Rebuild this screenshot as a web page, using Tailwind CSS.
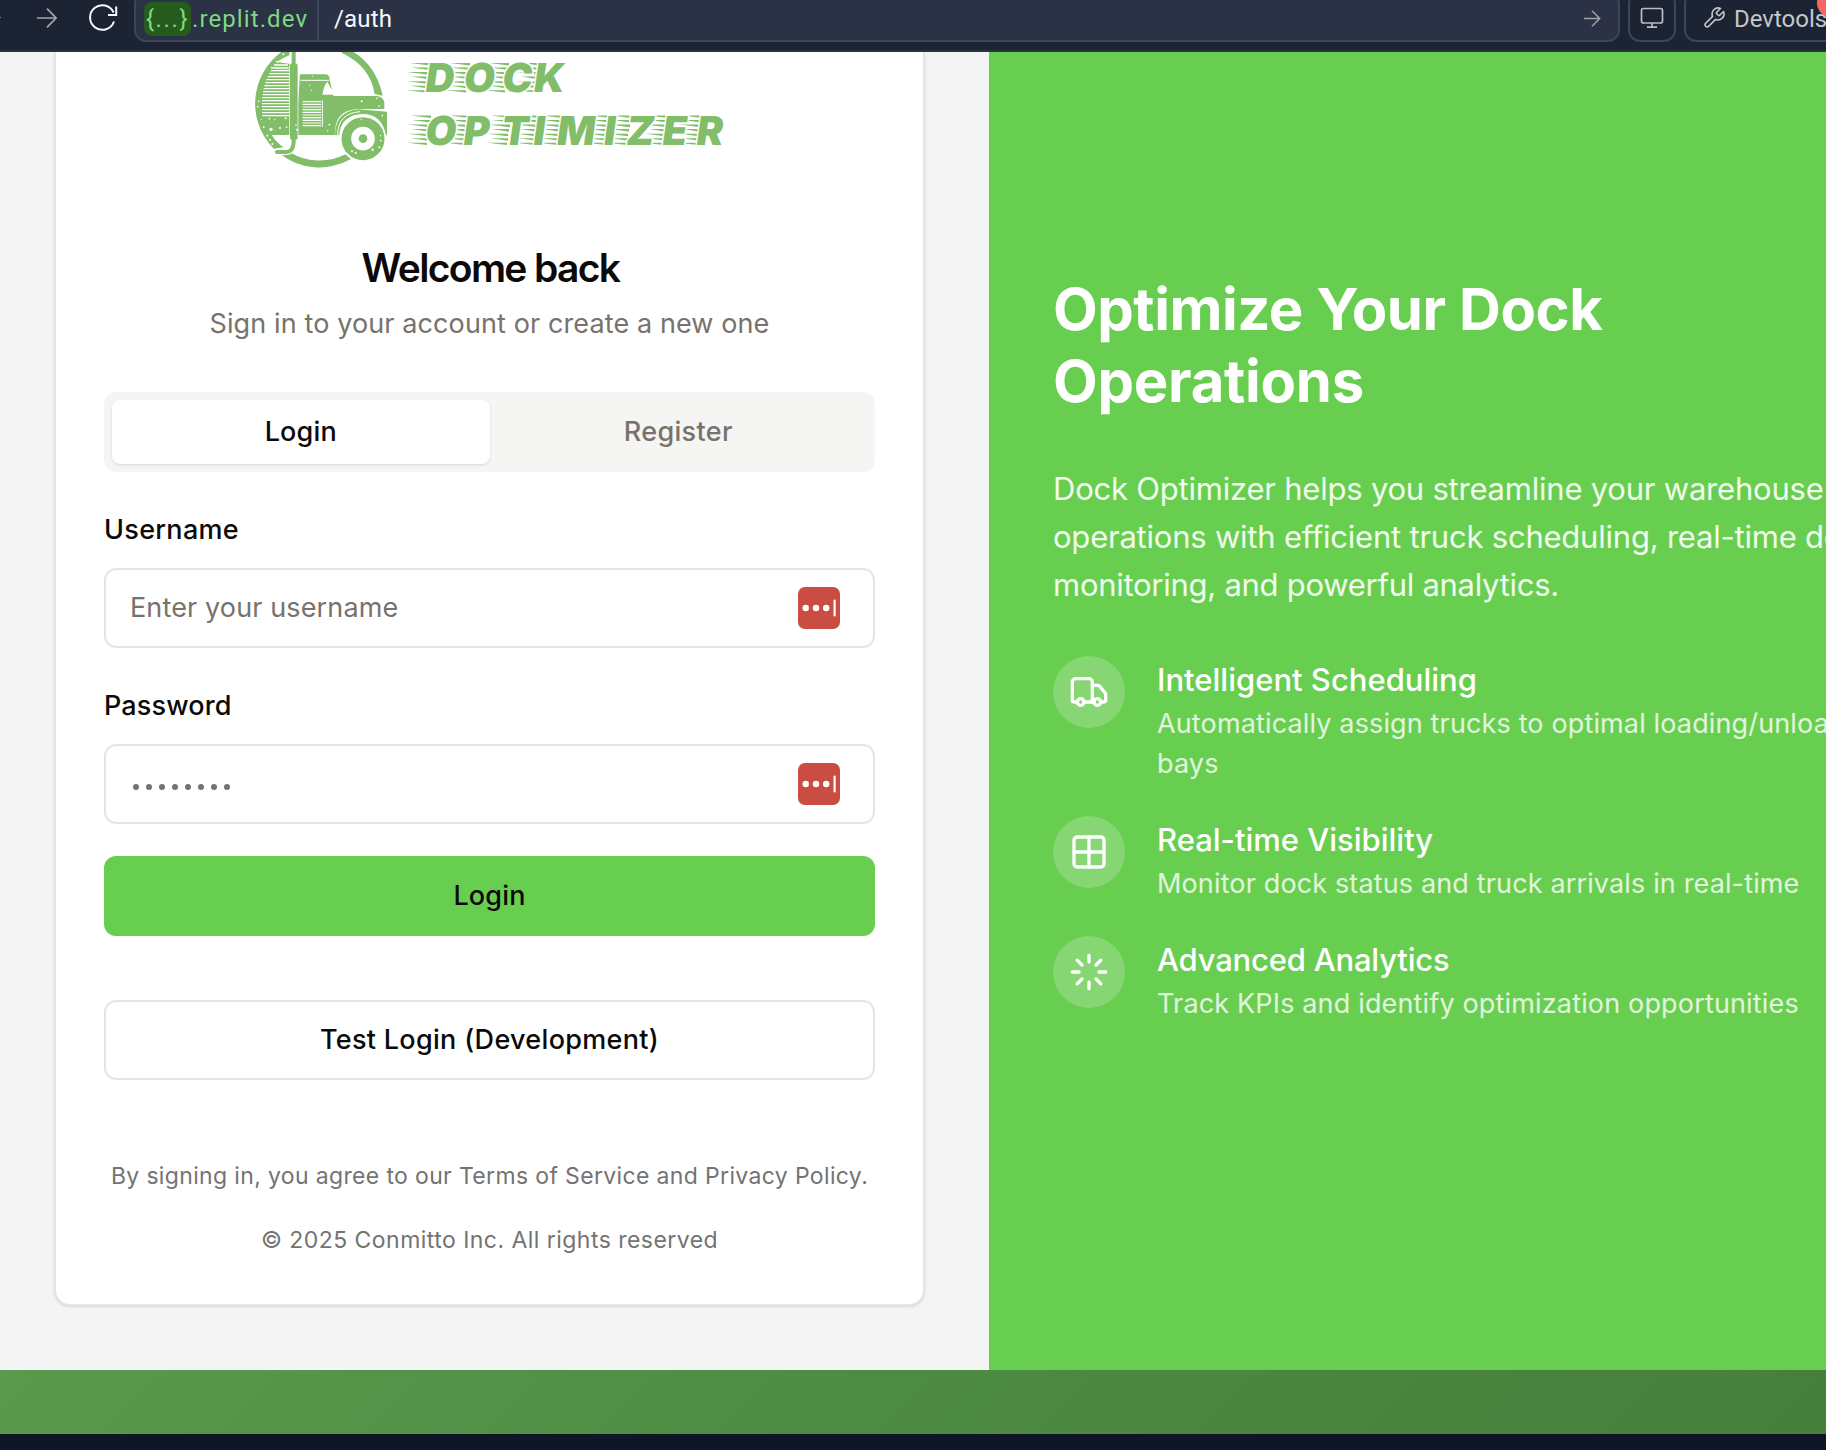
<!DOCTYPE html>
<html lang="en">
<head>
<meta charset="utf-8">
<title>Dock Optimizer</title>
<script src="https://cdn.jsdelivr.net/npm/@tailwindcss/browser@4"></script>
</head>
<body class="w-[1826px] h-[1450px] overflow-hidden bg-[#0e1525] font-['Inter',sans-serif] text-[#0c0a09]">

<header class="flex h-[52px] items-start overflow-hidden border-b-2 border-[#2b3245] bg-[#1c2333] font-['Roboto',sans-serif] text-[24px]">
  <div class="h-[1px] w-[1px] shrink-0 mt-[17px] bg-[#7f8593]"></div>
  <svg class="ml-[35px] mt-[7px] h-[22px] w-[22px] shrink-0" viewBox="0 0 23 22" fill="none" stroke="#a3a6ad" stroke-width="1.8"><path d="M1 11h20M11.500 1.200 21 11l-9.500 9.800"/></svg>
  <svg class="ml-[31px] mt-[4px] h-[28px] w-[30px] shrink-0" viewBox="0 0 30 28" fill="none" stroke="#f5f9fc" stroke-width="2"><path d="M25 17.500A12.300 12.300 0 1 1 24.600 8.500M27.200 2.500V11H19"/></svg>
  <div class="-mt-2 ml-[15px] flex h-[50px] w-[1486px] shrink-0 items-stretch rounded-xl border-2 border-[#3c445c] bg-[#2b3245] pt-[6px] leading-[40px]">
    <div class="-mt-[6px] flex w-[183px] shrink-0 items-center border-r-2 border-[#3c445c] pl-[8px] pt-[4px] text-[#7fd97f]">
      <span class="flex h-[34px] w-[47px] shrink-0 items-center justify-center rounded-lg bg-[#265b1e] tracking-[1.6px]">{...}</span><span class="pl-px tracking-[1.1px]">.replit.dev</span>
    </div>
    <span class="-mt-px pl-[15px] tracking-[.2px] text-[#f5f9fc]">/auth</span>
    <svg class="ml-auto mr-[17px] mt-[10px] h-[17px] w-[17px]" viewBox="0 0 17 17" fill="none" stroke="#9da2a6" stroke-width="1.500"><path d="M0 8.500h15.500M8 .8l7.700 7.700L8 16.200"/></svg>
  </div>
  <div class="-mt-2 ml-[8px] flex h-[50px] w-[48px] shrink-0 justify-center rounded-xl border-2 border-[#3c445c] pt-[13px]">
    <svg class="h-[22px] w-[24px]" viewBox="0 0 24 22" fill="none" stroke="#b9bdc4" stroke-width="1.700"><rect x="1.500" y="1.500" width="21" height="14.500" rx="2"/><path d="M12 16v4M7 20.200h10"/></svg>
  </div>
  <div class="-mt-2 ml-[8px] flex h-[50px] w-[200px] shrink-0 rounded-xl border-2 border-[#3c445c] pl-[16px] pt-[5px] leading-[40px] text-[#c2c8cc]">
    <svg class="mt-[7px] h-[24px] w-[24px] shrink-0" viewBox="0 0 24 24" fill="none" stroke="#c2c8cc" stroke-width="1.600" stroke-linejoin="round"><path d="M14.700 6.300a1 1 0 0 0 0 1.400l1.600 1.600a1 1 0 0 0 1.400 0l3.800-3.800a6 6 0 0 1-7.900 7.900l-6.900 6.900a2.120 2.120 0 0 1-3-3l6.900-6.900a6 6 0 0 1 7.900-7.900z"/></svg>
    <span class="ml-[8px]">Devtools</span>
  </div>
  <div class="absolute left-[1817px] -top-[11px] h-[28px] w-[28px] rounded-full bg-[#f56565]"></div>
</header>

<main class="flex h-[1318px]">
  <section class="w-[989px] shrink-0 bg-[#f4f4f4] pl-[54px]">
    <div class="h-[1254px] w-[871px] rounded-b-2xl border-2 border-t-0 border-[#e5e5e5] bg-white px-[48px] shadow-sm">
      <svg class="-ml-[48px] block h-[120px] w-[867px] max-w-none" viewBox="56 52 867 120" fill="#82bd69">
        <g transform="translate(240 40) scale(.33333)">
          <path d="M310 20Q405 60 428 167L404 162Q392 80 305 38Z"/>
          <path d="M118 340A192 192 0 0 0 333 357L316 343A170 170 0 0 1 152 338Z"/>
          <path d="M150 20A192 192 0 0 0 101 326L131 322Q108 308 92 280H152V72L110 66Q125 55 148 46Z"/>
          <path stroke="#fff" stroke-width="4" d="M102 75H144M99 84H146M93 92H148M88 101H148M83 110H148M79 119H148M76 128H148M73 137H148M71 146H148M69 155H148M68 164H148M67 173H148M66 182H148M66 191H148M66 200H148M66 209H148M66 218H148M67 227H148"/>
          <path d="M92 240H298V285H92Z"/>
          <path d="M174 190L180 103H258Q268 105 269 118L276 150L262 125Q252 135 247 164H280V168H412Q432 172 433 190V207H350Q290 212 286 272H174Z"/>
          <path d="M182 121H268" stroke="#fff" stroke-width="3"/>
          <path d="M247 180V260" stroke="#fff" stroke-width="3"/>
          <path stroke="#fff" stroke-width="3.500" d="M188 185H243M188 193H243M188 201H243M188 209H243M188 217H243M188 225H243M188 233H243M188 241H243M188 249H243M188 257H243"/>
          <path d="M286 285Q280 212 350 210H441V290H298" fill="#fff"/>
          <path d="M286 274Q290 215 355 208L441 215V286H437Q428 222 365 222Q302 226 298 286H286Z"/>
          <path d="M293 286Q293 220 360 215" stroke="#fff" stroke-width="3" fill="none"/>
          <path d="M161 290V312Q158 336 140 336H110" stroke="#fff" stroke-width="18" fill="none"/>
          <rect x="150" y="70" width="23" height="230" rx="8" stroke="#fff" stroke-width="4" paint-order="stroke"/>
          <path d="M161 20V75M161 290V308Q158 336 140 336H111" stroke="#82bd69" stroke-width="12" stroke-linecap="round" fill="none"/>
          <circle cx="369" cy="296" r="69" fill="#fff"/>
          <circle cx="369" cy="296" r="50" fill="none" stroke="#82bd69" stroke-width="29"/>
          <circle cx="369" cy="296" r="13"/>
          <g fill="#fff"><circle cx="93" cy="268" r="5"/><circle cx="71" cy="262" r="3"/><circle cx="120" cy="264" r="3"/><circle cx="137" cy="235" r="3"/><circle cx="88" cy="236" r="2.500"/><circle cx="104" cy="238" r="2"/><circle cx="140" cy="261" r="2.500"/><circle cx="168" cy="255" r="2.500"/><circle cx="171" cy="269" r="3"/><circle cx="82" cy="287" r="3"/><circle cx="90" cy="299" r="3"/><circle cx="97" cy="312" r="3"/><circle cx="56" cy="184" r="2.500"/><circle cx="53" cy="200" r="2.500"/><circle cx="64" cy="238" r="2"/><circle cx="96" cy="83" r="3"/><circle cx="111" cy="65" r="3"/><circle cx="130" cy="43" r="3"/><circle cx="217" cy="109" r="2"/><circle cx="209" cy="136" r="2"/><circle cx="214" cy="151" r="2"/><circle cx="365" cy="184" r="3"/><circle cx="411" cy="175" r="2.500"/><circle cx="417" cy="198" r="2.500"/><circle cx="268" cy="254" r="2.500"/><circle cx="263" cy="273" r="2"/><circle cx="427" cy="227" r="2.500"/><circle cx="364" cy="238" r="2"/><circle cx="336" cy="334" r="3"/><circle cx="347" cy="339" r="3"/><circle cx="398" cy="329" r="3.500"/><circle cx="418" cy="322" r="3"/><circle cx="422" cy="302" r="2.500"/><circle cx="422" cy="287" r="2"/></g>
        </g>
        <defs>
          <path id="speed" d="M-14 -28.900H6V-26.500zM-13 -24.400H5V-21.900zM-17 -19.900H5V-17.300zM-13 -15.400H4V-12.800zM-17 -10.800H3V-8.200zM-14 -6.300H3V-3.800zM-18 -1.800H2V.4z"/>
        </defs>
        <g>
          <use href="#speed" x="424" y="92"/><use href="#speed" x="464" y="92"/><use href="#speed" x="503" y="92"/><use href="#speed" x="534" y="92"/>
          <use href="#speed" x="425" y="144.500"/><use href="#speed" x="463" y="144.500"/><use href="#speed" x="505" y="144.500"/><use href="#speed" x="533" y="144.500"/><use href="#speed" x="556" y="144.500"/><use href="#speed" x="604" y="144.500"/><use href="#speed" x="625" y="144.500"/><use href="#speed" x="662" y="144.500"/><use href="#speed" x="696" y="144.500"/>
        </g>
        <g font-family="Inter, sans-serif" font-weight="900" font-size="40" stroke="#fff" stroke-width="3" paint-order="stroke">
          <text transform="translate(424 92) skewX(-8)" x="0 38.500 77 108.500">DOCK</text>
          <text transform="translate(424 144.600) skewX(-8)" x="0 38 76 108 131.500 178.500 201 237 271">OPTIMIZER</text>
        </g>
      </svg>
      <div class="mt-[76px] text-center">
        <h1 class="-mr-[2px] text-[39px] font-semibold leading-[40px] tracking-[-1.65px]">Welcome back</h1>
        <p class="mt-4 text-[27px] leading-[40px] tracking-[.11px] text-[#78716c]">Sign in to your account or create a new one</p>
      </div>
      <div class="mt-12 grid h-[80px] grid-cols-2 rounded-xl bg-[#f5f5f4] p-2 text-center text-[27px] font-medium leading-[64px]">
        <div class="rounded-lg bg-white tracking-[.15px] shadow-sm">Login</div>
        <div class="tracking-[.35px] text-[#78716c]">Register</div>
      </div>
      <form>
        <label class="mt-[38px] block text-[27px] font-medium leading-[40px] tracking-[.3px]">Username</label>
        <div class="mt-[18px] flex h-[80px] items-center rounded-xl border-2 border-[#e5e5e5] pl-[24px] pr-[33px] text-[27px] tracking-[.13px] text-[#78716c]">
          <span class="pt-px">Enter your username</span>
          <svg class="ml-auto h-[42px] w-[42px]" viewBox="0 0 42 42"><rect width="42" height="42" rx="7" fill="#c94d42"/><g fill="#fff"><circle cx="7.700" cy="21" r="3.200"/><circle cx="18" cy="21" r="3.200"/><circle cx="28.200" cy="21" r="3.200"/><rect x="35.500" y="12.500" width="2.200" height="17" rx="1"/></g></svg>
        </div>
        <label class="mt-[38px] block text-[27px] font-medium leading-[40px] tracking-[.15px]">Password</label>
        <div class="mt-[18px] flex h-[80px] items-center rounded-xl border-2 border-[#e5e5e5] pl-[27px] pr-[33px]">
          <svg class="mt-[6px] h-[6px] w-[98px]" viewBox="0 0 98 6" fill="#78716c"><circle cx="3" cy="3" r="3"/><circle cx="16" cy="3" r="3"/><circle cx="29" cy="3" r="3"/><circle cx="42" cy="3" r="3"/><circle cx="55" cy="3" r="3"/><circle cx="68" cy="3" r="3"/><circle cx="81" cy="3" r="3"/><circle cx="94" cy="3" r="3"/></svg>
          <svg class="ml-auto h-[42px] w-[42px]" viewBox="0 0 42 42"><rect width="42" height="42" rx="7" fill="#c94d42"/><g fill="#fff"><circle cx="7.700" cy="21" r="3.200"/><circle cx="18" cy="21" r="3.200"/><circle cx="28.200" cy="21" r="3.200"/><rect x="35.500" y="12.500" width="2.200" height="17" rx="1"/></g></svg>
        </div>
        <button type="button" class="mt-8 block h-[80px] w-full rounded-xl bg-[#68ce50] text-[27px] font-medium tracking-[.15px]">Login</button>
        <button type="button" class="mt-16 block h-[80px] w-full rounded-xl border-2 border-[#e5e5e5] text-[27px] font-medium tracking-[.31px]">Test Login (Development)</button>
      </form>
      <div class="mt-20 text-center text-[23px] leading-[32px] whitespace-nowrap text-[#737373]">
        <p class="tracking-[.35px]">By signing in, you agree to our Terms of Service and Privacy Policy.</p>
        <p class="mt-8 tracking-[.46px]">© 2025 Conmitto Inc. All rights reserved</p>
      </div>
    </div>
  </section>

  <section class="flex-1 overflow-hidden bg-[#68ce50] pl-[64px] pt-[221px] text-white whitespace-nowrap">
    <h2 class="text-[58px] font-bold leading-[72px]"><span class="tracking-[-.45px]">Optimize Your Dock</span><br><span class="tracking-[-.25px]">Operations</span></h2>
    <p class="mt-12 text-[31px] leading-[48px] tracking-[-.22px] text-white/90">Dock Optimizer helps you streamline your warehouse<br>operations with efficient truck scheduling, real-time dock<br><span class="tracking-[-.27px]">monitoring, and powerful analytics.</span></p>
    <div class="mt-[47px] flex flex-col gap-8">
      <div class="flex gap-8">
        <div class="flex h-[72px] w-[72px] shrink-0 items-center justify-center rounded-full bg-white/20">
          <svg class="h-10 w-10" viewBox="0 0 24 24" fill="none" stroke="white" stroke-width="2" stroke-linecap="round" stroke-linejoin="round"><path d="M14 18V6a2 2 0 0 0-2-2H4a2 2 0 0 0-2 2v11a1 1 0 0 0 1 1h2"/><path d="M15 18H9"/><path d="M19 18h2a1 1 0 0 0 1-1v-3.650a1 1 0 0 0-.22-.624l-3.480-4.350A1 1 0 0 0 17.520 8H14"/><circle cx="17" cy="18" r="2"/><circle cx="7" cy="18" r="2"/></svg>
        </div>
        <div><h3 class="text-[31px] font-medium leading-[48px]">Intelligent Scheduling</h3><p class="text-[27px] leading-[40px] tracking-[.14px] text-white/80">Automatically assign trucks to optimal loading/unloading<br>bays</p></div>
      </div>
      <div class="flex gap-8">
        <div class="flex h-[72px] w-[72px] shrink-0 items-center justify-center rounded-full bg-white/20">
          <svg class="h-10 w-10" viewBox="0 0 24 24" fill="none" stroke="white" stroke-width="2" stroke-linecap="round" stroke-linejoin="round"><rect x="3" y="3" width="18" height="18" rx="2"/><path d="M3 12h18M12 3v18"/></svg>
        </div>
        <div><h3 class="text-[31px] font-medium leading-[48px]">Real-time Visibility</h3><p class="text-[27px] leading-[40px] tracking-[.14px] text-white/80">Monitor dock status and truck arrivals in real-time</p></div>
      </div>
      <div class="flex gap-8">
        <div class="flex h-[72px] w-[72px] shrink-0 items-center justify-center rounded-full bg-white/20">
          <svg class="h-10 w-10" viewBox="0 0 24 24" fill="none" stroke="white" stroke-width="2" stroke-linecap="round" stroke-linejoin="round"><path d="M12 2v4M16.200 7.800l2.900-2.900M18 12h4M16.200 16.200l2.900 2.900M12 18v4M4.900 19.100l2.900-2.900M2 12h4M4.900 4.900l2.900 2.900"/></svg>
        </div>
        <div><h3 class="text-[31px] font-medium leading-[48px] tracking-[-.2px]">Advanced Analytics</h3><p class="text-[27px] leading-[40px] tracking-[.16px] text-white/80">Track KPIs and identify optimization opportunities</p></div>
      </div>
    </div>
  </section>
</main>
<div class="h-[64px] bg-linear-[135deg] from-[#599a4d] via-[#4d8a42] to-[#467f3c]"></div>
</body>
</html>
